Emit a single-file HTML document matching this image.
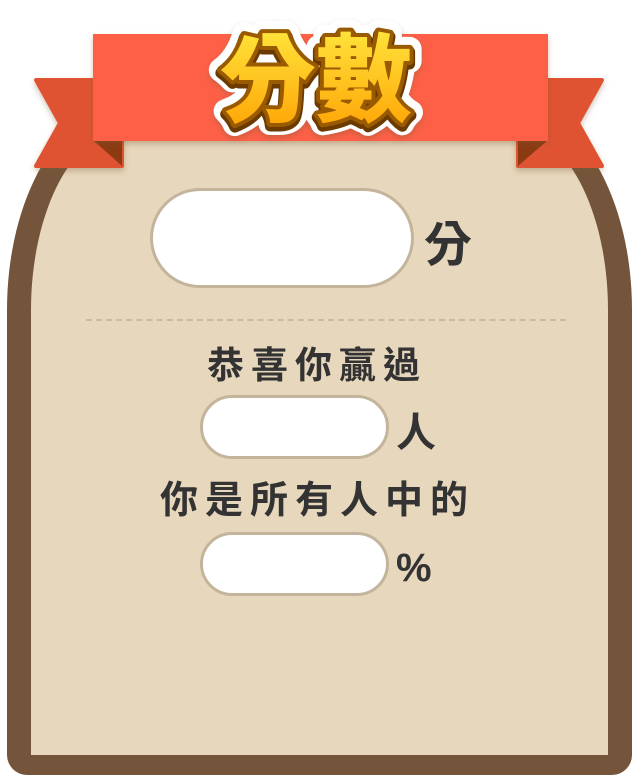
<!DOCTYPE html>
<html><head><meta charset="utf-8"><style>
html,body{margin:0;padding:0;background:#fff;}
body{width:638px;height:784px;position:relative;overflow:hidden;font-family:"Liberation Sans","Noto Sans CJK TC",sans-serif;}
.card{position:absolute;left:7px;top:105px;width:625px;height:670px;box-sizing:border-box;border:24px solid #74553b;border-bottom-width:20px;background:#e7d7bc;border-radius:120px 120px 20px 20px / 205px 205px 20px 20px;}
.abs{position:absolute;}
.pill{position:absolute;background:#fff;border:3px solid #c4b49b;box-sizing:border-box;}
.t{position:absolute;color:#333;font-weight:bold;font-family:"Noto Sans CJK TC",sans-serif;white-space:nowrap;}
</style></head><body>
<div class="card"></div>
<svg class="abs" style="left:0;top:0" width="638" height="200">
<defs><filter id="sh" x="-10%" y="-10%" width="120%" height="130%"><feDropShadow dx="0" dy="3" stdDeviation="3" flood-color="#7a5a30" flood-opacity="0.35"/></filter>
<linearGradient id="g" x1="0" y1="0.2" x2="0" y2="1"><stop offset="0" stop-color="#ffe33a"/><stop offset="1" stop-color="#ff9d00"/></linearGradient></defs>
<polygon filter="url(#sh)" points="36,80 122,80 122,166 36,166 60,123" fill="#e05233" stroke="#e05233" stroke-width="4" stroke-linejoin="round"/>
<polygon filter="url(#sh)" points="602,80 518,80 518,166 602,166 578,123" fill="#e05233" stroke="#e05233" stroke-width="4" stroke-linejoin="round"/>
<polygon points="93,140 122,140 122,166" fill="#8c3a12"/>
<polygon points="548,140 518,140 518,166" fill="#8c3a12"/>
<rect x="93" y="34" width="455" height="107" fill="#fd6147" filter="url(#sh)"/>
<text x="316" y="114" text-anchor="middle" font-family="Noto Sans CJK TC,sans-serif" font-weight="900" font-size="96" fill="#fff" stroke="#fff" stroke-width="24" stroke-linejoin="round" filter="url(#sh)">分數</text>
<text x="316" y="117" text-anchor="middle" font-family="Noto Sans CJK TC,sans-serif" font-weight="900" font-size="96" fill="#6b3a00" stroke="#6b3a00" stroke-width="11" stroke-linejoin="round">分數</text>
<text x="316" y="114" text-anchor="middle" font-family="Noto Sans CJK TC,sans-serif" font-weight="900" font-size="96" fill="url(#g)" stroke="#9a5a00" stroke-width="8" stroke-linejoin="round" paint-order="stroke">分數</text>
</svg>
<div class="pill" style="left:150px;top:188px;width:264px;height:100px;border-radius:50px"></div>
<div class="t" style="left:424px;top:210px;font-size:48px;line-height:60px">分</div>
<div class="abs" style="left:86px;top:319px;width:480px;border-top:2px dashed #c8b9a3"></div>
<div class="t" style="left:207px;top:337px;font-size:37px;line-height:50px;letter-spacing:7px">恭喜你贏過</div>
<div class="pill" style="left:200px;top:395px;width:189px;height:64px;border-radius:32px"></div>
<div class="t" style="left:396px;top:404px;font-size:40px;line-height:50px">人</div>
<div class="t" style="left:160px;top:472px;font-size:38px;line-height:50px;letter-spacing:7px">你是所有人中的</div>
<div class="pill" style="left:200px;top:532px;width:189px;height:64px;border-radius:32px"></div>
<div class="t" style="left:396px;top:543px;font-size:40px;line-height:50px;font-family:'Liberation Sans',sans-serif">%</div>
</body></html>
